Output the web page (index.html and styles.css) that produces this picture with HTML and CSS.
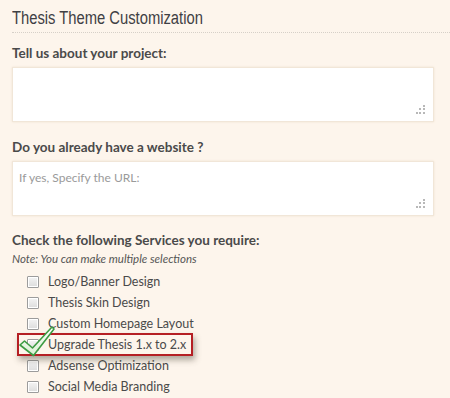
FILE: index.html
```html
<!DOCTYPE html>
<html>
<head>
    <meta charset="UTF-8"/>
    <title>Thesis Theme Customization</title>
    <link rel="stylesheet" href="styles.css">
</head>
<body>
<div class="page">
    <h1 class="title"><span>Thesis Theme Customization</span></h1>

    <label class="lbl lbl-first">Tell us about your project:</label>
    <div class="field">
        <textarea class="box"></textarea>
    </div>

    <label class="lbl">Do you already have a website ?</label>
    <div class="field">
        <textarea class="box" placeholder="If yes, Specify the URL:"></textarea>
    </div>

    <label class="lbl lbl-check">Check the following Services you require:</label>
    <p class="note">Note: You can make multiple selections</p>

    <ul class="services">
        <li><input type="checkbox" class="cb"/>Logo/Banner Design</li>
        <li><input type="checkbox" class="cb"/>Thesis Skin Design</li>
        <li><input type="checkbox" class="cb"/>Custom Homepage Layout</li>
        <li class="picked">
            <input type="checkbox" class="cb"/>Upgrade Thesis 1.x to 2.x
            <svg class="tick" width="36" height="31" viewBox="0 0 36 31">
                <defs>
                    <linearGradient id="tg" x1="0" y1="0" x2="0" y2="1">
                        <stop offset="0" stop-color="#ffffff"/>
                        <stop offset="1" stop-color="#d9efd2"/>
                    </linearGradient>
                </defs>
                <path d="M1 19 L5.5 15 L13.5 22 L33 1 L35 3 L14.5 29.5 Z" fill="url(#tg)" stroke="#3d9b43" stroke-width="1.6" stroke-linejoin="round"/>
            </svg>
        </li>
        <li><input type="checkbox" class="cb"/>Adsense Optimization</li>
        <li><input type="checkbox" class="cb"/>Social Media Branding</li>
    </ul>
</div>
</body>
</html>
```

FILE: styles.css
```css
html, body {
    padding: 0;
    margin: 0;
    overflow: hidden;
}

body {
    background-color: #fdf5ec;
    font-family: Lato, "Liberation Sans", sans-serif;
    color: #4a4a4a;
}

.page {
    display: flex;
    flex-direction: column;
    padding-left: 12px;
}

.title {
    margin: 0;
    padding: 7px 0 0 0;
    height: 25px;
    border-bottom: 1px dotted #d6d0c8;
    font-family: "Liberation Sans", sans-serif;
    font-weight: normal;
    font-size: 18px;
    line-height: 22px;
    color: #3f4044;
    white-space: nowrap;
}

.title span {
    display: inline-block;
    transform: scaleX(0.82);
    transform-origin: left center;
}

.lbl {
    display: block;
    font-weight: bold;
    font-size: 13.5px;
    line-height: 16px;
    color: #4a4a4a;
    margin-top: 17px;
    white-space: nowrap;
}

.lbl-first {
    margin-top: 12px;
}

.lbl-check {
    margin-top: 16px;
}

.field {
    position: relative;
    width: 422px;
    margin-top: 6px;
}

.field::after {
    content: "";
    position: absolute;
    right: 9px;
    bottom: 8px;
    width: 2px;
    height: 2px;
    background: #b8b8b8;
    box-shadow: -4px 0 0 #b8b8b8, -7px 0 0 #b8b8b8,
                0 -4px 0 #b8b8b8, -4px -4px 0 #b8b8b8,
                0 -7px 0 #b8b8b8;
}

.box {
    display: block;
    box-sizing: border-box;
    width: 422px;
    height: 55px;
    margin: 0;
    padding: 8px 6px;
    border: 1px solid #f1e6d8;
    box-shadow: 0 0 2px #efe2d0;
    background: #fff;
    resize: none;
    font-family: Lato, "Liberation Sans", sans-serif;
    font-size: 12px;
    color: #555;
    outline: none;
}

.box::placeholder {
    color: #9a9a9a;
}

.note {
    margin: 3px 0 0 0;
    font-size: 11.5px;
    line-height: 15px;
    font-style: italic;
    color: #555;
    white-space: nowrap;
}

.services {
    list-style: none;
    margin: 5px 0 0 0;
    padding: 0 0 0 15px;
}

.services li {
    display: flex;
    align-items: center;
    height: 21px;
    font-size: 12.5px;
    color: #4a4a4a;
    white-space: nowrap;
}

.cb {
    appearance: none;
    -webkit-appearance: none;
    box-sizing: border-box;
    width: 12px;
    height: 12px;
    margin: 0 9px 0 0;
    border: 1px solid #9c9c9c;
    border-radius: 1px;
    background: linear-gradient(#f4f4f4, #dcdcdc);
    box-shadow: inset 0 0 0 1px #fff;
}

.services li.picked {
    position: relative;
    box-sizing: border-box;
    width: 176px;
    height: 23px;
    margin: -1px 0 -1px -10px;
    padding-left: 8px;
    border: 2px solid #b51f24;
    box-shadow: 2px 4px 6px rgba(80, 70, 60, 0.45);
}

.tick {
    position: absolute;
    left: 0;
    top: -9px;
}
```
